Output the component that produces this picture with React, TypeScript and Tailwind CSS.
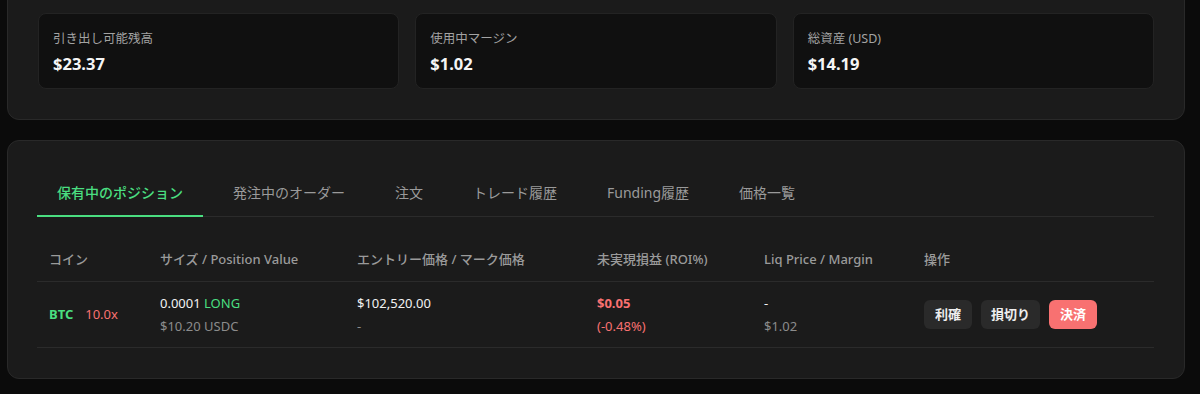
import type { ReactNode } from "react"

const stats = [
  { label: "引き出し可能残高", value: "$23.37" },
  { label: "使用中マージン", value: "$1.02" },
  { label: "総資産 (USD)", value: "$14.19" },
]

const tabs = ["保有中のポジション", "発注中のオーダー", "注文", "トレード履歴", "Funding履歴", "価格一覧"]

const headers = ["コイン", "サイズ / Position Value", "エントリー価格 / マーク価格", "未実現損益 (ROI%)", "Liq Price / Margin", "操作"]

const cols = "grid grid-cols-[111px_197px_240px_167px_160px_1fr]"

function Card({ children, className = "" }: { children: ReactNode; className?: string }) {
  return (
    <section className={`w-[1178px] rounded-xl border border-[#292929] bg-[#1b1b1b] ${className}`}>
      {children}
    </section>
  )
}

export default function App() {
  return (
    <div className="min-h-[394px] overflow-hidden bg-[#0b0b0b] pl-[7px] font-['Noto_Sans','Noto_Sans_CJK_JP',sans-serif] text-[#f2f2f2]">
      <Card className="-mt-[18px] p-[30px]">
        <div className="grid grid-cols-3 gap-4">
          {stats.map((s) => (
            <div key={s.label} className="rounded-lg border border-[#232323] bg-[#101010] px-[14px] pt-[15px] pb-[12px]">
              <div className="text-[12.5px] leading-5 text-[#a3a3a3]">{s.label}</div>
              <div className="mt-[3px] text-[16.5px] font-bold leading-6 text-[#f5f5f5]">{s.value}</div>
            </div>
          ))}
        </div>
      </Card>

      <Card className="mt-5 p-[30px] pl-[29px]">
        <div className="flex gap-[10px] border-b border-[#2b2b2b]">
          {tabs.map((t, i) => (
            <button
              key={t}
              className={
                i === 0
                  ? "-mb-px border-b-2 border-[#4ade80] px-5 py-3 text-sm leading-5 font-medium text-[#4ade80]"
                  : "-mb-px border-b-2 border-transparent px-5 py-3 text-sm leading-5 text-[#9a9a9a]"
              }
            >
              {t}
            </button>
          ))}
        </div>

        <div className="mt-5 text-[13px]">
          <div className={`${cols} border-b border-[#2b2b2b]`}>
            {headers.map((h) => (
              <div key={h} className="px-3 py-3 leading-5 font-medium text-[#9a9a9a]">
                {h}
              </div>
            ))}
          </div>

          <div className={`${cols} border-b border-[#2b2b2b]`}>
            <div className="flex items-center px-3">
              <span className="font-bold text-[#4ade80]">BTC</span>
              <span className="ml-3 text-[#f87171]">10.0x</span>
            </div>
            <div className="px-3 py-[11px] leading-5">
              <div>
                0.0001 <span className="text-[#4ade80]">LONG</span>
              </div>
              <div className="mt-[3px] text-[#8c8c8c]">$10.20 USDC</div>
            </div>
            <div className="px-3 py-[11px] leading-5">
              <div>$102,520.00</div>
              <div className="mt-[3px] text-[#8c8c8c]">-</div>
            </div>
            <div className="px-3 py-[11px] leading-5 text-[#f87171]">
              <div className="font-bold">$0.05</div>
              <div className="mt-[3px]">(-0.48%)</div>
            </div>
            <div className="px-3 py-[11px] leading-5">
              <div>-</div>
              <div className="mt-[3px] text-[#8c8c8c]">$1.02</div>
            </div>
            <div className="flex items-center gap-[9px] px-3">
              <button className="h-[29px] rounded-md bg-[#2a2a2a] px-[11px] font-semibold text-[#eeeeee]">利確</button>
              <button className="h-[29px] rounded-md bg-[#2a2a2a] px-[10px] font-semibold text-[#eeeeee]">損切り</button>
              <button className="h-[29px] rounded-md bg-[#f87171] px-[11px] font-semibold text-white">決済</button>
            </div>
          </div>
        </div>
      </Card>
    </div>
  )
}
